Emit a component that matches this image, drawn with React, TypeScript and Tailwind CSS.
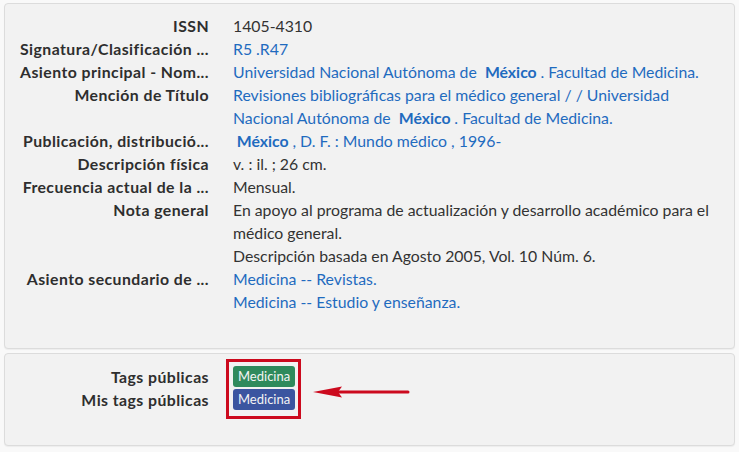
import type { ReactNode } from 'react';

const link = 'text-[#1f6bbf]';

function Row({ label, children }: { label: string; children: ReactNode }) {
  return (
    <>
      <dt className="whitespace-nowrap text-right font-bold tracking-[0.45px] text-[#2e2e2e]">{label}</dt>
      <dd className="text-[#333]">{children}</dd>
    </>
  );
}

function Mexico() {
  return <b className="font-bold"> México </b>;
}

function Tag({ color, children }: { color: string; children: ReactNode }) {
  return (
    <span className={`inline-flex h-[21px] items-center rounded-[3px] px-[5px] text-[13px] leading-none text-[#f4f4f4] ${color}`}>
      {children}
    </span>
  );
}

export default function App() {
  return (
    <div className="min-h-[452px] bg-[#f9f9f9] px-[4px] pt-[3px] font-['Source_Sans_Pro','Lato',sans-serif] text-[15.8px] leading-[23px]">
      <section className="rounded-[4px] border border-[#dcdcdc] bg-[#f2f2f2] pt-[10px] pb-[35px] pl-[12px] pr-[15px] shadow-[0_1px_1px_rgba(0,0,0,0.05)]">
        <dl className="grid grid-cols-[192px_1fr] gap-x-6">
          <Row label="ISSN">1405-4310</Row>
          <Row label="Signatura/Clasificación ...">
            <span className={link}>R5 .R47</span>
          </Row>
          <Row label="Asiento principal - Nom...">
            <span className={link}>
              Universidad Nacional Autónoma de&nbsp; <Mexico />. Facultad de Medicina.
            </span>
          </Row>
          <Row label="Mención de Título">
            <span className={link}>
              Revisiones bibliográficas para el médico general / / Universidad
              <br />
              Nacional Autónoma de&nbsp; <Mexico />. Facultad de Medicina.
            </span>
          </Row>
          <Row label="Publicación, distribució...">
            <span className={link}>
              <b className="font-bold">&nbsp;México </b>, D. F. : Mundo médico , 1996-
            </span>
          </Row>
          <Row label="Descripción física">v. : il. ; 26 cm.</Row>
          <Row label="Frecuencia actual de la ...">Mensual.</Row>
          <Row label="Nota general">
            En apoyo al programa de actualización y desarrollo académico para el
            <br />
            médico general.
            <br />
            Descripción basada en Agosto 2005, Vol. 10 Núm. 6.
          </Row>
          <Row label="Asiento secundario de ...">
            <span className={link}>Medicina -- Revistas.</span>
            <br />
            <span className={link}>Medicina -- Estudio y enseñanza.</span>
          </Row>
        </dl>
      </section>

      <section className="relative mt-[4px] rounded-[4px] border border-[#dcdcdc] bg-[#f2f2f2] pt-[11px] pb-[34px] pl-[12px] pr-[15px] shadow-[0_1px_1px_rgba(0,0,0,0.05)]">
        <dl className="grid grid-cols-[192px_1fr] gap-x-6">
          <Row label="Tags públicas">
            <div className="flex h-[23px] items-center">
              <Tag color="bg-[#2f8a5c]">Medicina</Tag>
            </div>
          </Row>
          <Row label="Mis tags públicas">
            <div className="flex h-[23px] items-center">
              <Tag color="bg-[#3b55a0]">Medicina</Tag>
            </div>
          </Row>
        </dl>
        <div className="pointer-events-none absolute top-[5px] left-[221px] h-[60px] w-[75px] border-[3px] border-[#cc0a1e]" />
        <svg className="pointer-events-none absolute top-[31px] left-[306px]" width="100" height="14" viewBox="0 0 100 14">
          <path d="M28 7 H97" stroke="#cc0a1e" strokeWidth="3" strokeLinecap="round" />
          <path d="M2 7 L31 1.5 L27 7 L31 12.5 Z" fill="#cc0a1e" />
        </svg>
      </section>
    </div>
  );
}
